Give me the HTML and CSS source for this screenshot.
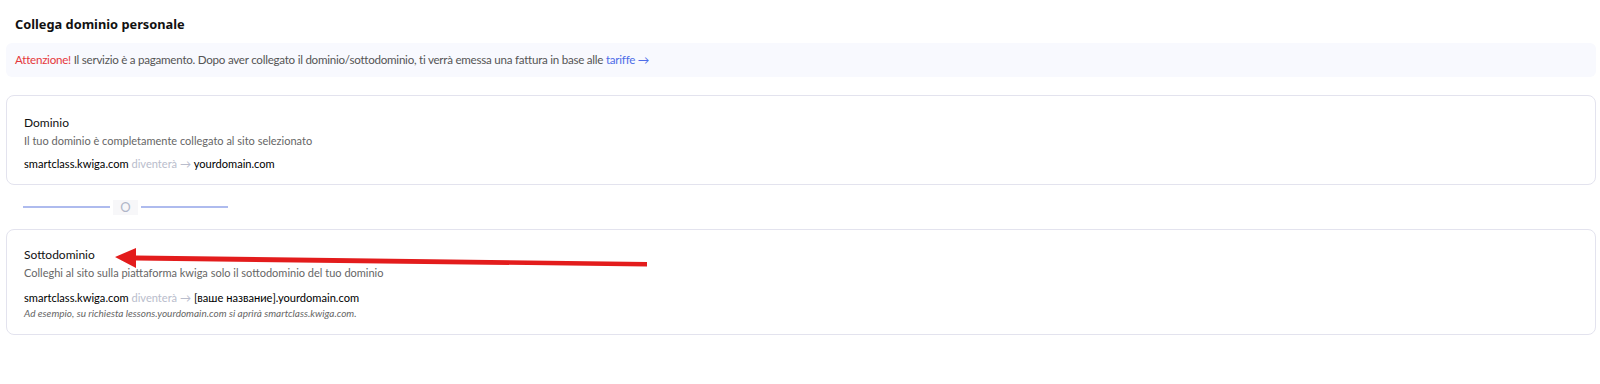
FILE: index.html
```html
<!DOCTYPE html>
<html lang="it">
<head>
<meta charset="UTF-8"/>
<link rel="stylesheet" href="styles.css">
</head>
<body>
<div id="wrapper">
<h2 class="title">Collega dominio personale</h2>
<div class="notice"><span class="warn">Attenzione!</span> Il servizio è a pagamento. Dopo aver collegato il dominio/sottodominio, ti verrà emessa una fattura in base alle <a href="#" class="link">tariffe →</a></div>

<div class="card">
<div class="card-title">Dominio</div>
<p class="card-desc">Il tuo dominio è completamente collegato al sito selezionato</p>
<p class="domain">smartclass.kwiga.com <span class="muted">diventerà →</span> yourdomain.com</p>
</div>

<div class="divider"><span class="line"></span><span class="or">O</span><span class="line"></span></div>

<div class="card card-sub">
<div class="card-title">Sottodominio</div>
<p class="card-desc">Colleghi al sito sulla piattaforma kwiga solo il sottodominio del tuo dominio</p>
<p class="domain">smartclass.kwiga.com <span class="muted">diventerà →</span> [ваше название].yourdomain.com</p>
<p class="note">Ad esempio, su richiesta lessons.yourdomain.com si aprirà smartclass.kwiga.com.</p>
<svg class="arrow" width="540" height="26" viewBox="0 0 540 26">
<polygon points="21,2 21,9.5 532,16 532,20.5 21,14.5 21,22 0,11" fill="#e31c1c"/>
</svg>
</div>
</div>
</body>
</html>
```
FILE: styles.css
```css
body {
	margin:0;
	background:#fff;
	font-family:Lato, "Liberation Sans", sans-serif;
	color:#222;
}
#wrapper {
	padding:0 4px 0 6px;
}
.title {
	font-family:"Noto Sans", sans-serif;
	font-size:12.8px;
	font-weight:700;
	margin:0;
	padding:15px 0 0 9px;
	height:43px;
	box-sizing:border-box;
	line-height:18px;
	color:#111;
}
.notice {
	background:#f8f9fe;
	border-radius:6px;
	height:34px;
	line-height:34px;
	padding:0 9px;
	font-size:11.6px;
	color:#555;
	letter-spacing:-0.25px;
}
.warn {
	color:#e5383b;
}
.link {
	color:#4e6de8;
	text-decoration:none;
}
.card {
	border:1px solid #e3e3ee;
	border-radius:8px;
	margin-top:18px;
	padding:19px 17px 0;
	box-sizing:border-box;
	height:90px;
}
.card-sub {
	position:relative;
	margin-top:0;
	padding-top:17px;
	height:106px;
}
.card-title {
	font-size:12px;
	color:#111;
	line-height:16px;
	margin-bottom:2px;
}
.card-desc {
	margin:0;
	font-size:11px;
	color:#666;
	line-height:16px;
}
.domain {
	margin:7px 0 0;
	font-size:11.1px;
	color:#000;
	line-height:16px;
}
.card-sub .domain {
	margin-top:9px;
}
.muted {
	color:#b9bdcc;
}
.note {
	margin:0;
	font-size:10px;
	font-style:italic;
	color:#666;
	line-height:14px;
}
.divider {
	display:flex;
	align-items:center;
	height:44px;
	padding-left:17px;
	gap:3px;
}
.line {
	width:87px;
	height:2px;
	background:#aebbee;
}
.or {
	background:#f7f7f9;
	color:#b0b6c8;
	font-size:13px;
	line-height:15px;
	width:25px;
	text-align:center;
}
.arrow {
	position:absolute;
	left:108px;
	top:16px;
}
```
